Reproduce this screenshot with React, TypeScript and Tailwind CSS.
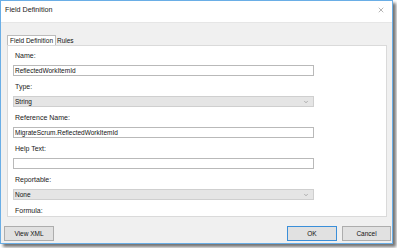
import { ChevronDown, X } from 'lucide-react';

const font = "font-['Liberation_Sans',Arial,sans-serif]";

function Label({ text }: { text: string }) {
  return <div className="h-[12px] leading-[12px] pl-[7px] text-[7px] text-[#1a1a1a]">{text}</div>;
}

function TextBox({ value }: { value: string }) {
  return (
    <div className="mt-[3px] mb-[5px] ml-[5px] w-[301px] h-[11px] border border-[#b9b9b9] bg-white pl-[1px] text-[6.5px] leading-[9px] text-[#111]">
      {value}
    </div>
  );
}

function Select({ value }: { value: string }) {
  return (
    <div className="mt-[3px] mb-[5px] ml-[5px] w-[301px] h-[11px] border border-[#cfcfcf] bg-[#e5e5e5] pl-[1px] flex items-center justify-between text-[6.5px] text-[#111]">
      <span className="leading-[9px]">{value}</span>
      <ChevronDown size={6} strokeWidth={2} className="mr-[4px] text-[#777]" />
    </div>
  );
}

export default function App() {
  return (
    <div className={`w-[397px] h-[248px] bg-white ${font}`}>
      {/* Dialog window */}
      <div className="w-[393px] h-[244px] border border-[#6aaee6] bg-[#f0f0f0] flex flex-col shadow-[3px_3px_3px_rgba(0,0,0,0.55)]">
        {/* Title bar */}
        <div className="h-[22px] bg-white flex items-center justify-between pl-[4px] pr-[7px] border-b border-[#e6e6e6]">
          <span className="text-[7.2px] text-[#222] -mt-[2px]">Field Definition</span>
          <X size={8} strokeWidth={1.3} className="text-[#555] -mt-[4px]" />
        </div>

        {/* Tabs */}
        <div className="flex pl-[6px] pt-[12px] h-[22px] items-end">
          <div className="h-[10px] px-[2px] border border-b-0 border-[#bcbcbc] bg-white text-[6.5px] leading-[9px] text-[#111]">
            Field Definition
          </div>
          <div className="h-[9px] px-[1px] text-[6.5px] leading-[9px] text-[#111]">Rules</div>
        </div>

        {/* Panel */}
        <div className="ml-[6px] w-[380px] h-[172px] bg-white border border-[#dadada] pt-[4px]">
          <Label text="Name:" />
          <TextBox value="ReflectedWorkItemId" />
          <Label text="Type:" />
          <Select value="String" />
          <Label text="Reference Name:" />
          <TextBox value="MigrateScrum.ReflectedWorkItemId" />
          <Label text="Help Text:" />
          <TextBox value="" />
          <Label text="Reportable:" />
          <Select value="None" />
          <Label text="Formula:" />
        </div>

        {/* Buttons */}
        <div className="flex items-center justify-between pl-[3px] pr-[1px] mt-[9px]">
          <button className="w-[50px] h-[15px] border border-[#adadad] bg-[#e1e1e1] text-[6.5px] text-[#111]">View XML</button>
          <div className="flex gap-[5px]">
            <button className="w-[50px] h-[15px] border border-[#3b8fd9] bg-[#e1e1e1] text-[6.5px] text-[#111]">OK</button>
            <button className="w-[49px] h-[15px] border border-[#adadad] bg-[#e1e1e1] text-[6.5px] text-[#111]">Cancel</button>
          </div>
        </div>
      </div>
    </div>
  );
}
